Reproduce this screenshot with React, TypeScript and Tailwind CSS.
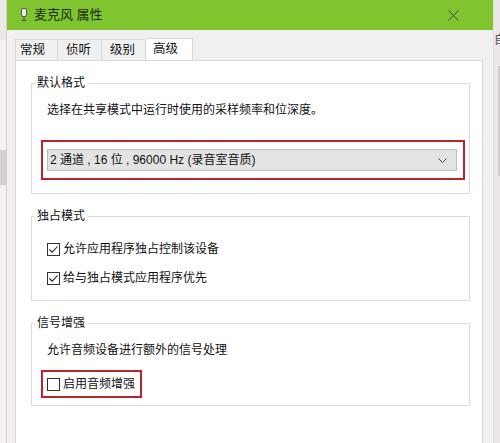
const font = { fontFamily: '"Liberation Sans", "Noto Sans CJK SC", sans-serif' };

function Check({ checked }: { checked: boolean }) {
  return (
    <span className="flex h-[13px] w-[13px] shrink-0 items-center justify-center border border-[#333] bg-white">
      {checked && (
        <svg width="11" height="11" viewBox="0 0 11 11">
          <path d="M1.5 5.5 L4.2 8.2 L9.5 2.5" fill="none" stroke="#222" strokeWidth="1.1" />
        </svg>
      )}
    </span>
  );
}

function Group({ title, children }: { title: string; children: React.ReactNode }) {
  return (
    <fieldset className="ml-[15px] w-[439px] border border-[#dcdcdc]">
      <legend className="ml-[3px] px-[2px] text-[12px] leading-[16px] text-[#111]">{title}</legend>
      {children}
    </fieldset>
  );
}

export default function App() {
  return (
    <div className="flex h-[443px] w-[500px] overflow-hidden bg-[#f4f2f2]" style={font}>
      {/* background behind the dialog, left */}
      <div className="flex w-[7px] shrink-0 flex-col border-r border-[#e8c9c9]">
        <div className="h-[40px] bg-[#ebe8e8]" />
        <div className="mt-[110px] h-[35px] bg-[#d2d0d0]" />
      </div>

      {/* dialog */}
      <div className="flex w-[486px] shrink-0 flex-col bg-[#f0f0f0]">
        <div className="flex h-[30px] shrink-0 items-center bg-[#80c52f] pl-[13px] pr-[34px]">
          <svg width="8" height="14" viewBox="0 0 8 14" className="shrink-0">
            <rect x="1.5" y="0.5" width="5" height="8" rx="1.5" fill="#e8e8e8" stroke="#555" />
            <path d="M4 9 V12 M1.5 12.5 H6.5" stroke="#555" strokeWidth="1.2" />
          </svg>
          <span className="ml-[6px] text-[13px] text-[#1b2a10]">麦克风 属性</span>
          <div className="flex-1" />
          <svg width="11" height="11" viewBox="0 0 11 11">
            <path d="M0.5 0.5 L10.5 10.5 M10.5 0.5 L0.5 10.5" stroke="#2f4a1a" strokeWidth="1" />
          </svg>
        </div>

        <div className="flex h-[30px] shrink-0 items-end pl-[8px] text-[12.5px] text-[#111]">
          <div className="flex h-[21px] w-[43px] items-center border border-b-0 border-[#d9d9d9] bg-[#f0f0f0] pl-[4px]">常规</div>
          <div className="flex h-[21px] w-[44px] items-center border-y border-r border-b-0 border-[#d9d9d9] bg-[#f0f0f0] pl-[8px]">侦听</div>
          <div className="flex h-[21px] w-[44px] items-center border-r border-t border-[#d9d9d9] bg-[#f0f0f0] pl-[8px]">级别</div>
          <div className="flex h-[22px] w-[47px] items-center border-r border-t border-[#d9d9d9] bg-white pl-[7px]">高级</div>
        </div>

        <div className="ml-[8px] flex w-[468px] flex-1 flex-col border-x border-t border-[#d9d9d9] bg-white pt-[14px] text-[12px] leading-[16px] text-[#111]">
          <Group title="默认格式">
            <div className="pb-[13px] pl-[15px] pt-[11px]">
              <div>选择在共享模式中运行时使用的采样频率和位深度。</div>
              <div className="-ml-[6px] mt-[22px] w-[424px] border-2 border-[#b8262b] pb-[7px] pl-[4px] pr-[6px] pt-[7px]">
                <div className="flex h-[22px] items-center border border-[#bdbdbd] bg-[#e3e3e3] pl-[2px] pr-[9px]">
                  <span className="flex-1 text-[12px]">2 通道 , 16 位 , 96000 Hz (录音室音质)</span>
                  <svg width="9" height="5" viewBox="0 0 9 5">
                    <path d="M0.5 0.5 L4.5 4.5 L8.5 0.5" fill="none" stroke="#444" strokeWidth="1" />
                  </svg>
                </div>
              </div>
            </div>
          </Group>

          <div className="mt-[14px]">
            <Group title="独占模式">
              <div className="flex flex-col gap-[13px] pb-[14px] pl-[15px] pt-[17px]">
                <div className="flex items-center gap-[3px]">
                  <Check checked />
                  <span>允许应用程序独占控制该设备</span>
                </div>
                <div className="flex items-center gap-[3px]">
                  <Check checked />
                  <span>给与独占模式应用程序优先</span>
                </div>
              </div>
            </Group>
          </div>

          <div className="mt-[14px]">
            <Group title="信号增强">
              <div className="pb-[7px] pl-[15px] pt-[11px]">
                <div>允许音频设备进行额外的信号处理</div>
                <div className="-ml-[6px] mt-[12px] flex h-[28px] w-[101px] items-center gap-[3px] border-2 border-[#b8262b] pl-[4px]">
                  <Check checked={false} />
                  <span>启用音频增强</span>
                </div>
              </div>
            </Group>
          </div>
        </div>
      </div>

      {/* background behind the dialog, right */}
      <div className="flex w-[7px] shrink-0 flex-col border-l border-[#e3dede] bg-[#ece8e8]">
        <div className="h-[30px]" />
        <div className="h-[20px] overflow-hidden text-[12px] leading-[20px] text-[#555]">自</div>
        <div className="mt-[16px] h-[110px] border-r-2 border-[#cfcaca]" />
      </div>
    </div>
  );
}
